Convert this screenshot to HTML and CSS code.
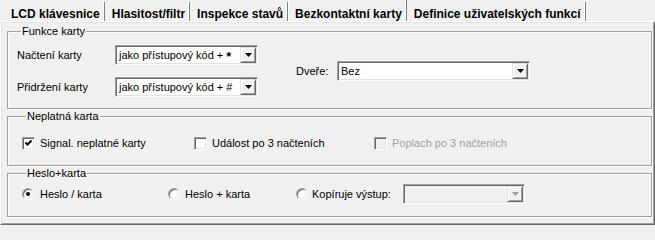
FILE: index.html
```html
<!DOCTYPE html>
<html lang="cs">
<head>
<meta charset="utf-8">
<title>Bezkontaktní karty</title>
<link rel="stylesheet" href="styles.css">
</head>
<body>
<div class="window">
  <div class="tabs">
    <div class="tab first">LCD klávesnice</div>
    <div class="tab">Hlasitost/filtr</div>
    <div class="tab">Inspekce stavů</div>
    <div class="tab active">Bezkontaktní karty</div>
    <div class="tab">Definice uživatelských funkcí</div>
  </div>
  <div class="page">
    <fieldset class="group g1">
      <legend>Funkce karty</legend>
      <div class="card-grid">
        <span class="lbl l1">Načtení karty</span>
        <div class="combo c-card k1"><span class="val">jako přístupový kód + <span class="star">*</span></span><span class="btn"><svg width="7" height="4" viewBox="0 0 7 4"><polygon points="0,0 7,0 3.5,4" fill="#000"/></svg></span></div>
        <span class="lbl l2">Přidržení karty</span>
        <div class="combo c-card k2"><span class="val">jako přístupový kód + #</span><span class="btn"><svg width="7" height="4" viewBox="0 0 7 4"><polygon points="0,0 7,0 3.5,4" fill="#000"/></svg></span></div>
        <span class="lbl dvere">Dveře:</span>
        <div class="combo c-door"><span class="val">Bez</span><span class="btn"><svg width="7" height="4" viewBox="0 0 7 4"><polygon points="0,0 7,0 3.5,4" fill="#000"/></svg></span></div>
      </div>
    </fieldset>
    <fieldset class="group g2">
      <legend>Neplatná karta</legend>
      <div class="opts">
        <label class="opt o1"><span class="chk"><svg width="7" height="7" viewBox="0 0 7 7"><polyline points="0.5,2.5 2.5,4.5 6.5,0.5" fill="none" stroke="#000" stroke-width="2"/></svg></span>Signal. neplatné karty</label>
        <label class="opt o2"><span class="chk"></span>Událost po 3 načteních</label>
        <label class="opt disabled"><span class="chk"></span>Poplach po 3 načteních</label>
      </div>
    </fieldset>
    <fieldset class="group g3">
      <legend>Heslo+karta</legend>
      <div class="opts">
        <label class="opt r1"><span class="radio on"></span>Heslo / karta</label>
        <label class="opt r2"><span class="radio"></span>Heslo + karta</label>
        <label class="opt r3"><span class="radio"></span>Kopíruje výstup:</label>
        <div class="combo c-out off"><span class="val"></span><span class="btn"><svg width="7" height="4" viewBox="0 0 7 4"><polygon points="0,0 7,0 3.5,4" fill="#a0a0a0"/></svg></span></div>
      </div>
    </fieldset>
  </div>
</div>
</body>
</html>
```

FILE: styles.css
```css
html, body {
  margin: 0;
  padding: 0;
  background: #f0f0f0;
}
body {
  font-family: "Liberation Sans", Arial, sans-serif;
  font-size: 11px;
  color: #000;
}
.window {
  width: 655px;
  height: 227px;
  overflow: hidden;
}
.tabs {
  display: flex;
  height: 21px;
  padding-left: 2px;
  box-sizing: border-box;
  align-items: flex-end;
}
.tab {
  font-weight: bold;
  font-size: 12px;
  line-height: 14px;
  height: 19px;
  box-sizing: border-box;
  padding: 5px 4px 0 7px;
  position: relative;
  border-right: 1px solid #808080;
  box-shadow: inset -1px 0 0 #fff;
  white-space: nowrap;
}
.tab.first {
  padding-left: 9px;
}
.tab.active {
  height: 21px;
  padding-top: 7px;
  padding-left: 6px;
  padding-right: 4px;
  border-left: 1px solid #fff;
}
.page {
  height: 204px;
  box-sizing: border-box;
  border: 1px solid;
  border-color: #fff #696969 #696969 #fff;
  box-shadow: inset 1px 1px 0 #e3e3e3, inset -1px -1px 0 #a0a0a0;
  padding: 3px 2px 0 6px;
  display: flex;
  flex-direction: column;
}
.group {
  margin: 0 0 1px 0;
  padding: 0;
  border: 1px solid #a0a0a0;
  box-shadow: inset 1px 1px 0 #fff, 1px 1px 0 #fff;
  min-width: 0;
}
.group legend {
  font-size: 11px;
  line-height: 13px;
  padding: 0 1px;
  margin-left: 4px;
  background: #f0f0f0;
}
.g1 {
  padding: 7px 0 11px 9px;
}
.g2 {
  padding: 10px 0 12px 14px;
}
.g3 {
  padding: 4px 0 12px 14px;
}
.card-grid {
  display: grid;
  grid-template-columns: 98px 143px 38px 41px 193px;
  grid-template-rows: 20px 20px;
  row-gap: 12px;
  align-items: center;
}
.lbl {
  white-space: nowrap;
}
.l1 { grid-column: 1; grid-row: 1; }
.k1 { grid-column: 2; grid-row: 1; }
.l2 { grid-column: 1; grid-row: 2; }
.k2 { grid-column: 2; grid-row: 2; }
.dvere {
  grid-column: 4;
  grid-row: 1 / span 2;
}
.c-door {
  grid-column: 5;
  grid-row: 1 / span 2;
}
.combo {
  display: flex;
  align-items: center;
  height: 20px;
  box-sizing: border-box;
  background: #fff;
  border: 1px solid;
  border-color: #a0a0a0 #fff #fff #a0a0a0;
  box-shadow: inset 1px 1px 0 #696969, inset -1px -1px 0 #e3e3e3;
  padding: 1px 1px 1px 3px;
}
.combo .val {
  flex: 1;
  white-space: nowrap;
  line-height: 16px;
  overflow: hidden;
}
.star {
  font-weight: bold;
  font-size: 13px;
  line-height: 10px;
  position: relative;
  top: 2px;
}
.combo .btn {
  width: 16px;
  height: 16px;
  box-sizing: border-box;
  background: #f0f0f0;
  border: 1px solid;
  border-color: #e3e3e3 #696969 #696969 #e3e3e3;
  box-shadow: inset 1px 1px 0 #fff, inset -1px -1px 0 #a0a0a0;
  display: flex;
  align-items: center;
  justify-content: center;
  flex: none;
}
.combo .btn svg {
  display: block;
}
.combo.off {
  background: #f0f0f0;
}
.c-out {
  width: 122px;
}
.opts {
  display: flex;
  align-items: center;
  height: 20px;
}
.opt {
  display: flex;
  align-items: center;
  gap: 5px;
  white-space: nowrap;
}
.o1 { width: 172px; }
.o2 { width: 180px; }
.r1 { width: 146px; gap: 6px; }
.r2 { width: 128px; gap: 5px; }
.r3 { width: 107px; gap: 4px; }
.opt.disabled {
  color: #a0a0a0;
}
.chk {
  width: 13px;
  height: 13px;
  box-sizing: border-box;
  background: #fff;
  border: 1px solid;
  border-color: #a0a0a0 #fff #fff #a0a0a0;
  box-shadow: inset 1px 1px 0 #696969, inset -1px -1px 0 #e3e3e3;
  display: flex;
  align-items: center;
  justify-content: center;
  flex: none;
}
.disabled .chk {
  background: #f0f0f0;
}
.radio {
  width: 12px;
  height: 12px;
  box-sizing: border-box;
  border-radius: 50%;
  background: #fff;
  border: 1px solid;
  border-color: #a0a0a0 #fff #fff #a0a0a0;
  box-shadow: inset 1px 1px 0 #696969, inset -1px -1px 0 #e3e3e3;
  flex: none;
  display: flex;
  align-items: center;
  justify-content: center;
}
.radio.on::after {
  content: "";
  width: 4px;
  height: 4px;
  border-radius: 50%;
  background: #000;
}
```
